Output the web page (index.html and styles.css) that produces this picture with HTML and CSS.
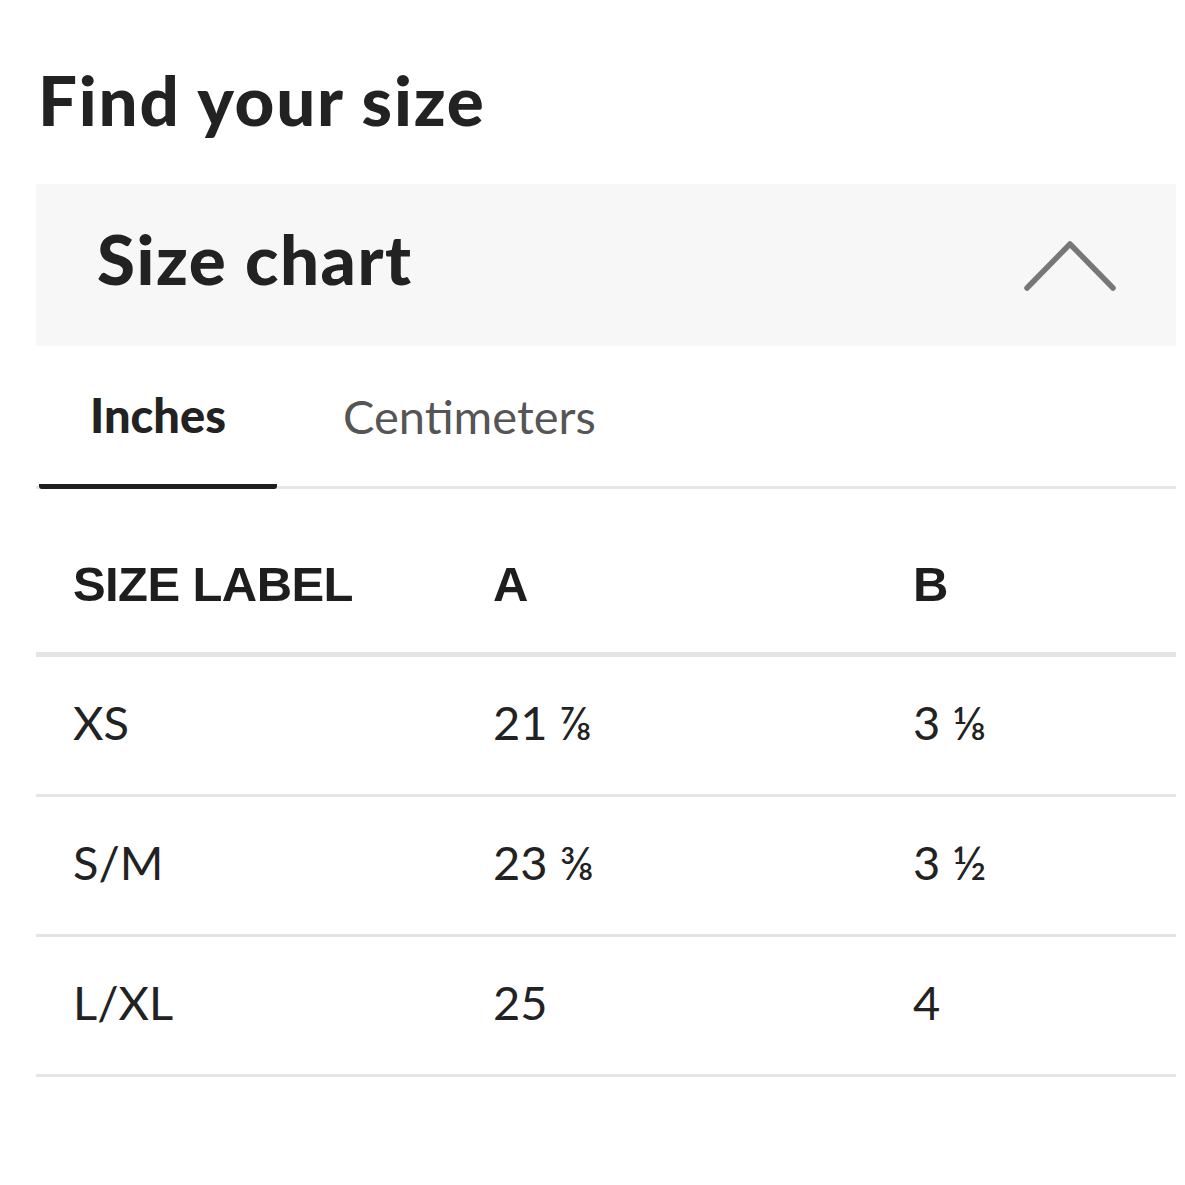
FILE: index.html
```html
<!DOCTYPE html>
<html lang="en">
<head>
    <meta charset="UTF-8">
    <meta name="viewport" content="width=device-width, initial-scale=1.0">
    <title>Find your size</title>
    <link rel="stylesheet" href="styles.css">
</head>
<body>
    <div class="page">
        <h1 class="page-title">Find your size</h1>
        <div class="chart-header">
            <span class="chart-title">Size chart</span>
            <svg class="chevron" width="92" height="52" viewBox="0 0 92 52">
                <polyline points="3,49 46,5 89,49" fill="none" stroke="#777" stroke-width="5.5" stroke-linecap="round" stroke-linejoin="round"/>
            </svg>
        </div>
        <div class="tabs">
            <span class="tab tab-active">Inches</span>
            <span class="tab">Centimeters</span>
        </div>
        <table class="size-table">
            <thead>
                <tr>
                    <th class="col-label">SIZE LABEL</th>
                    <th class="col-a">A</th>
                    <th>B</th>
                </tr>
            </thead>
            <tbody>
                <tr>
                    <td>XS</td>
                    <td>21 ⅞</td>
                    <td>3 ⅛</td>
                </tr>
                <tr>
                    <td>S/M</td>
                    <td>23 ⅜</td>
                    <td>3 ½</td>
                </tr>
                <tr>
                    <td>L/XL</td>
                    <td>25</td>
                    <td>4</td>
                </tr>
            </tbody>
        </table>
    </div>
</body>
</html>
```

FILE: styles.css
```css
body {
    margin: 0;
    background: #fff;
    color: #222;
    font-family: Lato, "Noto Sans", sans-serif;
}
.page {
    padding: 0 9px 0 36px;
}
.page-title {
    margin: 0;
    padding-top: 50px;
    line-height: 100px;
    font-size: 69px;
    font-weight: 900;
    letter-spacing: 1.8px;
    padding-left: 2px;
}
.chart-header {
    margin-top: 34px;
    height: 162px;
    background: #f7f7f7;
    display: flex;
    align-items: center;
    justify-content: space-between;
    padding: 0 60px 0 61px;
}
.chart-title {
    font-size: 69px;
    font-weight: 900;
    letter-spacing: 1.5px;
    margin-top: -14px;
}
.chevron {
    display: block;
}
.tabs {
    display: flex;
    height: 140px;
    border-bottom: 3px solid #e6e6e6;
}
.tab {
    display: flex;
    align-items: center;
    font-size: 47px;
    color: #555;
}
.tab-active {
    width: 238px;
    margin-left: 3px;
    justify-content: center;
    font-weight: 900;
    color: #222;
    border-bottom: 5px solid #1e1e1e;
    border-radius: 3px;
    margin-bottom: -3px;
}
.tab-active + .tab {
    padding-left: 66px;
}
.size-table {
    width: 100%;
    border-collapse: collapse;
}
.size-table th {
    font-family: "Liberation Sans", Arial, sans-serif;
    font-size: 49px;
    line-height: 56px;
    font-weight: 700;
    letter-spacing: -0.6px;
    text-align: left;
    vertical-align: top;
    padding: 67px 0 40px 37px;
    border-bottom: 5px solid #e4e4e4;
    color: #1e1e1e;
}
.size-table td {
    font-size: 47px;
    height: 129px;
    padding: 0 0 8px 37px;
    border-bottom: 3px solid #e4e4e4;
}
.col-label,
.col-a {
    width: 383px;
}
```
